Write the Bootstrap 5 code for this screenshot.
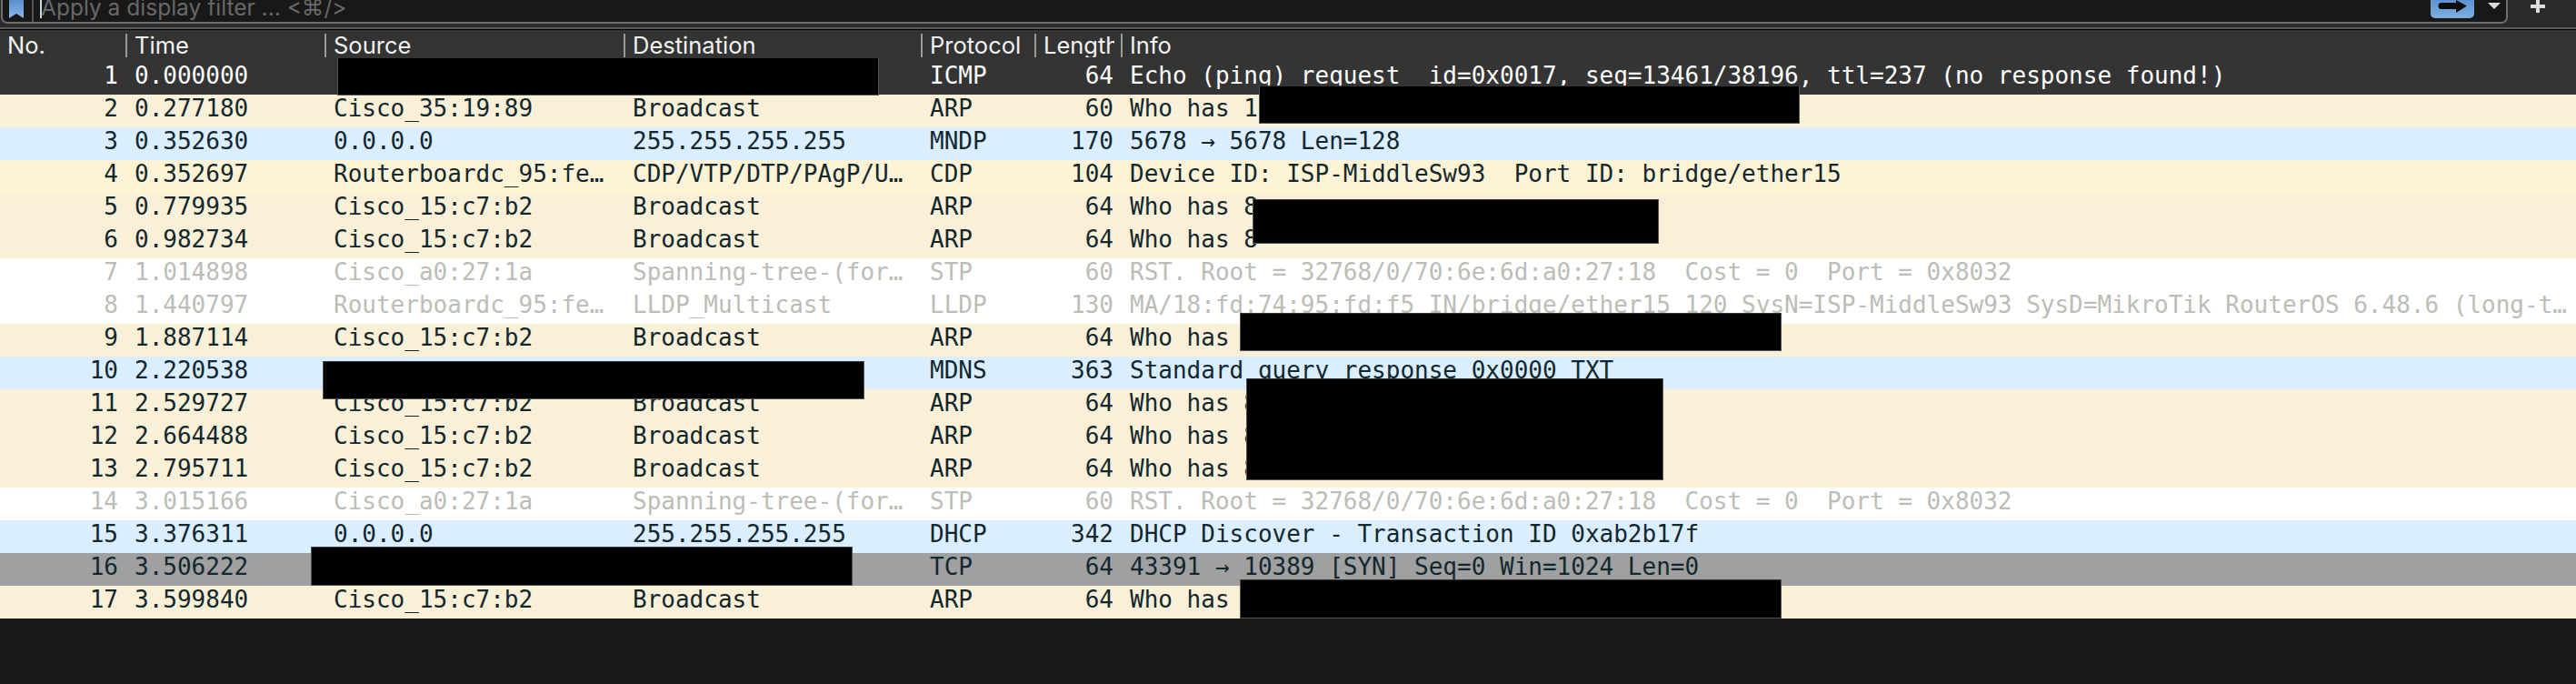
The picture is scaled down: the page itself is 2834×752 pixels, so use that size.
<!DOCTYPE html>
<html lang="en">
<head>
  <meta charset="UTF-8" />
  <title>Wireshark packet list</title>
  <link href="https://cdn.jsdelivr.net/npm/bootstrap@5.3.3/dist/css/bootstrap.min.css" rel="stylesheet">
  <script src="https://cdn.jsdelivr.net/npm/bootstrap@5.3.3/dist/js/bootstrap.bundle.min.js"></script>
  <style>
    body {
      margin: 0;
      height: 752px;
      overflow: hidden;
      background-color: #181818;
    }

    /* filter bar */
    .top-strip {
      height: 30px;
      background-color: #2a2a2a;
      padding-left: 1px;
      padding-right: 34px;
    }
    .filter-box {
      height: 26px;
      background-color: #181818;
      border: 2px solid #6e6e6e;
      border-top: 0;
      border-radius: 0 0 7px 7px;
      overflow: hidden;
    }
    .bookmark-btn {
      width: 34px;
      height: 24px;
      padding-left: 7px;
      border-right: 2px solid #555;
    }
    .filter-cursor {
      width: 2px;
      height: 20px;
      margin-left: 7px;
      background-color: #d8d8d8;
    }
    .filter-text {
      margin-left: -1px;
      margin-bottom: 1px;
      font-family: Inter, "DejaVu Sans", sans-serif;
      font-size: 24.5px;
      line-height: 30px;
      color: #686868;
      white-space: nowrap;
    }
    .apply-btn {
      width: 48px;
      height: 20px;
      border-radius: 0 0 5px 5px;
      background: linear-gradient(#5b93d2, #7fafdf);
      padding-left: 8px;
    }
    .drop-arrow {
      margin-left: 15px;
      margin-right: 6px;
      margin-top: 3px;
    }
    .plus-icon {
      margin-left: 25px;
    }
    .strip-rule {
      height: 2px;
      background-color: #5a5a5a;
    }
    .strip-black {
      height: 1px;
      background-color: #000;
    }

    /* packet table */
    .packet-table {
      table-layout: fixed;
      margin: 0;
      font-family: "DejaVu Sans Mono", monospace;
      font-size: 26px;
    }
    .packet-table tr {
      border: 0;
    }
    .c-no { width: 138px; }
    .c-time { width: 219px; }
    .c-src { width: 329px; }
    .c-dst { width: 327px; }
    .c-proto { width: 125px; }
    .c-len { width: 95px; }

    .packet-table th {
      height: 35px;
      padding: 4px 0 5px;
      background-color: #333;
      color: #f2f2f2;
      font-family: Inter, "Liberation Sans", sans-serif;
      font-size: 25.5px;
      font-weight: 400;
      line-height: 26px;
      border: 0;
    }
    .head-cell {
      height: 26px;
      padding-left: 8px;
      border-left: 2px solid #9a9a9a;
      white-space: nowrap;
    }
    .head-first {
      border-left-color: transparent;
      padding-left: 6px;
    }
    .head-clip {
      margin-right: 7px;
      overflow: hidden;
    }
    .packet-table td {
      height: 36px;
      padding: 0 0 6px 10px;
      line-height: 30px;
      white-space: pre;
      border: 0;
      background-color: var(--row-bg);
      color: var(--row-fg);
    }
    .packet-table td.num-cell {
      padding-left: 0;
      padding-right: 8px;
      text-align: right;
    }
    .row-dark { --row-bg: #343434; --row-fg: #fff; }
    .row-arp { --row-bg: #faf0d7; --row-fg: #12272e; }
    .row-cdp { --row-bg: #fff3d6; --row-fg: #12272e; }
    .row-blue { --row-bg: #daeeff; --row-fg: #12272e; }
    .row-dim { --row-bg: #fff; --row-fg: #bbbdb6; }
    .row-gray { --row-bg: #a0a0a0; --row-fg: #12272e; }

    /* black boxes laid over the table */
    .redact {
      position: absolute;
      background-color: #000;
      border: 1px solid #555;
      border-top-color: #333;
    }
    .redact-1 { left: 371px; top: 63px; width: 596px; height: 42px; }
    .redact-2 { left: 1385px; top: 94px; width: 595px; height: 42px; }
    .redact-3 { left: 1378px; top: 219px; width: 447px; height: 49px; }
    .redact-4 { left: 1364px; top: 344px; width: 596px; height: 42px; }
    .redact-5 { left: 355px; top: 397px; width: 596px; height: 42px; }
    .redact-6 { left: 1371px; top: 416px; width: 459px; height: 112px; }
    .redact-7 { left: 342px; top: 601px; width: 596px; height: 43px; }
    .redact-8 { left: 1364px; top: 637px; width: 596px; height: 43px; }
  </style>
</head>
<body class="position-relative">

  <div class="top-strip d-flex align-items-start">
    <div class="filter-box d-flex flex-grow-1 align-items-start">
      <div class="bookmark-btn flex-shrink-0">
        <svg width="16" height="20" viewBox="0 0 16 20" class="d-block">
          <defs>
            <linearGradient id="ribbon" x1="0" y1="0" x2="0" y2="1">
              <stop offset="0" stop-color="#5a8fd0" />
              <stop offset="1" stop-color="#8ab7e6" />
            </linearGradient>
          </defs>
          <polygon points="0,0 16,0 16,20 8,15 0,20" fill="url(#ribbon)" />
        </svg>
      </div>
      <div class="filter-cursor flex-shrink-0"></div>
      <div class="filter-text align-self-end">Apply a display filter ... &lt;⌘/&gt;</div>
      <div class="apply-btn ms-auto flex-shrink-0">
        <svg width="32" height="14" viewBox="0 0 32 14" class="d-block">
          <path d="M4 3H20V0L32 6.500L20 14V10H4A3.500 3.500 0 0 1 4 3Z" fill="#0d0d0d" />
        </svg>
      </div>
      <svg class="drop-arrow flex-shrink-0" width="14" height="7" viewBox="0 0 14 7">
        <polygon points="0,0 14,0 7,7" fill="#dcdcdc" />
      </svg>
    </div>
    <svg class="plus-icon flex-shrink-0" width="16" height="14" viewBox="0 0 16 14">
      <path d="M6 0H10V5H16V9H10V14H6V9H0V5H6Z" fill="#dcdcdc" />
    </svg>
  </div>
  <div class="strip-rule"></div>
  <div class="strip-black"></div>

  <table class="table table-borderless packet-table">
    <colgroup>
      <col class="c-no"><col class="c-time"><col class="c-src"><col class="c-dst"><col class="c-proto"><col class="c-len"><col>
    </colgroup>
    <thead>
      <tr>
        <th><div class="head-cell head-first">No.</div></th>
        <th><div class="head-cell">Time</div></th>
        <th><div class="head-cell">Source</div></th>
        <th><div class="head-cell">Destination</div></th>
        <th><div class="head-cell">Protocol</div></th>
        <th><div class="head-cell head-clip">Length</div></th>
        <th><div class="head-cell">Info</div></th>
      </tr>
    </thead>
    <tbody>
      <tr class="row-dark"><td class="num-cell">1</td><td>0.000000</td><td></td><td></td><td>ICMP</td><td class="num-cell">64</td><td>Echo (ping) request  id=0x0017, seq=13461/38196, ttl=237 (no response found!)</td></tr>
      <tr class="row-arp"><td class="num-cell">2</td><td>0.277180</td><td>Cisco_35:19:89</td><td>Broadcast</td><td>ARP</td><td class="num-cell">60</td><td>Who has 1</td></tr>
      <tr class="row-blue"><td class="num-cell">3</td><td>0.352630</td><td>0.0.0.0</td><td>255.255.255.255</td><td>MNDP</td><td class="num-cell">170</td><td>5678 → 5678 Len=128</td></tr>
      <tr class="row-cdp"><td class="num-cell">4</td><td>0.352697</td><td>Routerboardc_95:fe…</td><td>CDP/VTP/DTP/PAgP/U…</td><td>CDP</td><td class="num-cell">104</td><td>Device ID: ISP-MiddleSw93  Port ID: bridge/ether15</td></tr>
      <tr class="row-arp"><td class="num-cell">5</td><td>0.779935</td><td>Cisco_15:c7:b2</td><td>Broadcast</td><td>ARP</td><td class="num-cell">64</td><td>Who has 8</td></tr>
      <tr class="row-arp"><td class="num-cell">6</td><td>0.982734</td><td>Cisco_15:c7:b2</td><td>Broadcast</td><td>ARP</td><td class="num-cell">64</td><td>Who has 8</td></tr>
      <tr class="row-dim"><td class="num-cell">7</td><td>1.014898</td><td>Cisco_a0:27:1a</td><td>Spanning-tree-(for…</td><td>STP</td><td class="num-cell">60</td><td>RST. Root = 32768/0/70:6e:6d:a0:27:18  Cost = 0  Port = 0x8032</td></tr>
      <tr class="row-dim"><td class="num-cell">8</td><td>1.440797</td><td>Routerboardc_95:fe…</td><td>LLDP_Multicast</td><td>LLDP</td><td class="num-cell">130</td><td>MA/18:fd:74:95:fd:f5 IN/bridge/ether15 120 SysN=ISP-MiddleSw93 SysD=MikroTik RouterOS 6.48.6 (long-t…</td></tr>
      <tr class="row-arp"><td class="num-cell">9</td><td>1.887114</td><td>Cisco_15:c7:b2</td><td>Broadcast</td><td>ARP</td><td class="num-cell">64</td><td>Who has</td></tr>
      <tr class="row-blue"><td class="num-cell">10</td><td>2.220538</td><td></td><td></td><td>MDNS</td><td class="num-cell">363</td><td>Standard query response 0x0000 TXT</td></tr>
      <tr class="row-arp"><td class="num-cell">11</td><td>2.529727</td><td>Cisco_15:c7:b2</td><td>Broadcast</td><td>ARP</td><td class="num-cell">64</td><td>Who has 8</td></tr>
      <tr class="row-arp"><td class="num-cell">12</td><td>2.664488</td><td>Cisco_15:c7:b2</td><td>Broadcast</td><td>ARP</td><td class="num-cell">64</td><td>Who has 8</td></tr>
      <tr class="row-arp"><td class="num-cell">13</td><td>2.795711</td><td>Cisco_15:c7:b2</td><td>Broadcast</td><td>ARP</td><td class="num-cell">64</td><td>Who has 8</td></tr>
      <tr class="row-dim"><td class="num-cell">14</td><td>3.015166</td><td>Cisco_a0:27:1a</td><td>Spanning-tree-(for…</td><td>STP</td><td class="num-cell">60</td><td>RST. Root = 32768/0/70:6e:6d:a0:27:18  Cost = 0  Port = 0x8032</td></tr>
      <tr class="row-blue"><td class="num-cell">15</td><td>3.376311</td><td>0.0.0.0</td><td>255.255.255.255</td><td>DHCP</td><td class="num-cell">342</td><td>DHCP Discover - Transaction ID 0xab2b17f</td></tr>
      <tr class="row-gray"><td class="num-cell">16</td><td>3.506222</td><td></td><td></td><td>TCP</td><td class="num-cell">64</td><td>43391 → 10389 [SYN] Seq=0 Win=1024 Len=0</td></tr>
      <tr class="row-arp"><td class="num-cell">17</td><td>3.599840</td><td>Cisco_15:c7:b2</td><td>Broadcast</td><td>ARP</td><td class="num-cell">64</td><td>Who has</td></tr>
    </tbody>
  </table>

  <div class="redact redact-1"></div>
  <div class="redact redact-2"></div>
  <div class="redact redact-3"></div>
  <div class="redact redact-4"></div>
  <div class="redact redact-5"></div>
  <div class="redact redact-6"></div>
  <div class="redact redact-7"></div>
  <div class="redact redact-8"></div>

</body>
</html>
